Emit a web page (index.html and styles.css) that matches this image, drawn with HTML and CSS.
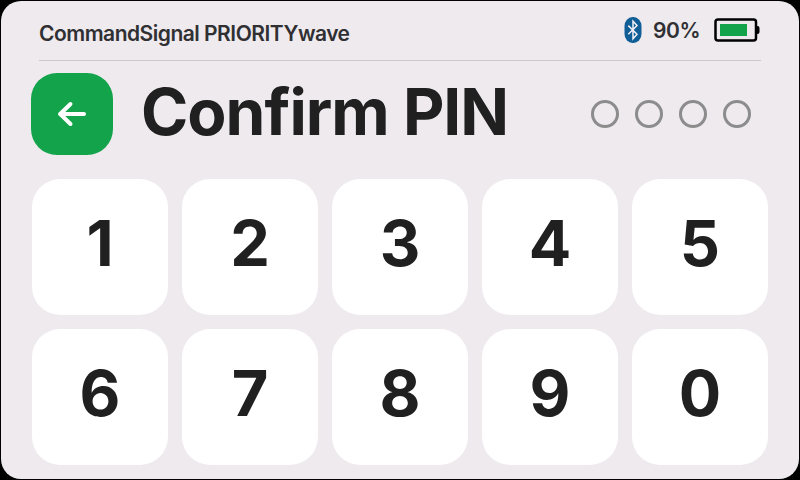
FILE: index.html
```html
<!DOCTYPE html>
<html lang="en">
<head>
    <meta charset="UTF-8">
    <title>Confirm PIN</title>
    <link rel="stylesheet" href="styles.css">
</head>
<body>
<div class="screen">
    <div class="status">
        <span class="device">CommandSignal PRIORITYwave</span>
        <svg class="bluetooth" width="18" height="26" viewBox="0 0 18 26">
            <rect x="0.5" y="0" width="17" height="26" rx="8" ry="9" fill="#115e97"/>
            <path d="M4.3 8.6L13 17.3L9 21.8V4.2L13 8.6L4.3 17.3" fill="none" stroke="#f4f0f4" stroke-width="1.5"/>
        </svg>
        <span class="percent">90%</span>
        <svg class="battery" width="46" height="24" viewBox="0 0 46 24">
            <path d="M42 8h1.5q2 0 2 2v4q0 2-2 2H42z" fill="#000"/>
            <rect x="1.5" y="1.5" width="40.5" height="21" rx="2.5" fill="none" stroke="#000" stroke-width="2.5"/>
            <rect x="6" y="6" width="27" height="12" fill="#13a34a"/>
        </svg>
    </div>
    <div class="top">
        <button class="back" type="button" aria-label="Back">
            <svg width="30" height="26" viewBox="0 0 30 26">
                <path d="M27 13H3M13.5 3L3.2 13L13.5 23" fill="none" stroke="#fff" stroke-width="4" stroke-linecap="round" stroke-linejoin="round"/>
            </svg>
        </button>
        <h1 class="title">Confirm PIN</h1>
        <div class="dots">
            <span class="dot"></span>
            <span class="dot"></span>
            <span class="dot"></span>
            <span class="dot"></span>
        </div>
    </div>
    <div class="keys">
        <button class="key" type="button">1</button>
        <button class="key" type="button">2</button>
        <button class="key" type="button">3</button>
        <button class="key" type="button">4</button>
        <button class="key" type="button">5</button>
        <button class="key" type="button">6</button>
        <button class="key" type="button">7</button>
        <button class="key" type="button">8</button>
        <button class="key" type="button">9</button>
        <button class="key" type="button">0</button>
    </div>
</div>
</body>
</html>
```
FILE: styles.css
```css
*{
    margin: 0;
    padding: 0;
    box-sizing: border-box;
}
body{
    width: 800px;
    height: 480px;
    padding: 1px;
    background-color: #000;
    font-family: Inter, "Liberation Sans", sans-serif;
    overflow: hidden;
}
.screen{
    width: 798px;
    height: 478px;
    border-radius: 20px;
    background-color: #eeeaee;
    color: #202020;
}
.status{
    display: flex;
    align-items: center;
    height: 60px;
    margin: 0 38px;
    border-bottom: 1px solid #c9c8cb;
    color: #303033;
    font-size: 21px;
    font-weight: 600;
}
.device{
    padding-top: 6px;
    letter-spacing: -0.5px;
}
.bluetooth{
    margin-left: auto;
    margin-right: 11px;
    margin-bottom: 2px;
}
.percent{
    width: 61px;
    letter-spacing: -0.4px;
}
.battery{
    margin-right: 1px;
    margin-bottom: 1px;
}
.top{
    display: flex;
    align-items: center;
    height: 82px;
    margin: 12px 48px 0 30px;
}
.back{
    display: flex;
    align-items: center;
    justify-content: center;
    width: 82px;
    height: 82px;
    border: none;
    border-radius: 26px;
    background-color: #13a34a;
}
.title{
    margin-left: 28px;
    padding-bottom: 5px;
    font-size: 64px;
    font-weight: 700;
    letter-spacing: -1px;
    line-height: 76px;
    white-space: nowrap;
}
.dots{
    display: flex;
    gap: 16px;
    margin-left: auto;
}
.dot{
    width: 28px;
    height: 28px;
    border: 3px solid #8c8c8c;
    border-radius: 50%;
}
.keys{
    display: grid;
    grid-template-columns: repeat(5, 136px);
    grid-auto-rows: 136px;
    gap: 14px;
    margin: 24px 0 0 31px;
}
.key{
    padding-bottom: 8px;
    border: none;
    border-radius: 28px;
    background-color: #fff;
    color: #202020;
    font-family: inherit;
    font-size: 63px;
    font-weight: 700;
}
```
